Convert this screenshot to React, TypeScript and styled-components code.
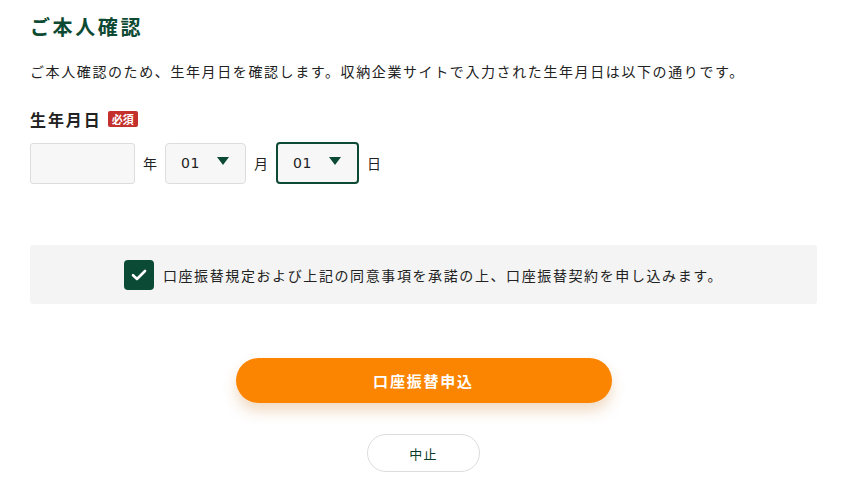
import React from "react";
import styled, { createGlobalStyle } from "styled-components";

const Global = createGlobalStyle`
  html, body { margin: 0; padding: 0; background: #fff; }
  body {
    font-family: "Noto Sans CJK JP", "Noto Sans", sans-serif;
    color: #222;
    letter-spacing: 0.1em;
  }
`;

const Page = styled.div`
  padding: 12px 25px 0 30px;
  display: flex;
  flex-direction: column;
`;

const Title = styled.h1`
  margin: 0;
  font-size: 20px;
  line-height: 30px;
  font-weight: 700;
  letter-spacing: 0.13em;
  color: #0d4a33;
`;

const Lead = styled.p`
  margin: 19px 0 0;
  font-size: 14px;
  line-height: 20px;
  color: #222;
`;

const FieldLabel = styled.div`
  margin-top: 26px;
  display: flex;
  align-items: center;
  gap: 6px;
  font-size: 16px;
  font-weight: 700;
  line-height: 24px;
  letter-spacing: 0.12em;
  color: #222;
`;

const Badge = styled.span`
  background: #c4302b;
  color: #fff;
  font-size: 11px;
  font-weight: 700;
  line-height: 14px;
  letter-spacing: 0;
  padding: 1px 4px;
  border-radius: 2px;
`;

const DateRow = styled.div`
  margin-top: 11px;
  display: flex;
  align-items: center;
`;

const YearInput = styled.input`
  box-sizing: border-box;
  width: 105px;
  height: 41px;
  border: 1px solid #ddd;
  border-radius: 3px;
  background: #f7f7f7;
  outline: none;
  font-size: 14px;
  font-family: inherit;
`;

const Unit = styled.span`
  font-size: 14px;
  letter-spacing: 0;
  color: #222;
  margin: 0 8px;
`;

const SelectBox = styled.div<{ $focused?: boolean }>`
  box-sizing: border-box;
  width: ${(p) => (p.$focused ? 83 : 81)}px;
  height: ${(p) => (p.$focused ? 42 : 41)}px;
  border: ${(p) => (p.$focused ? "2px solid #0d4a33" : "1px solid #ddd")};
  border-radius: 4px;
  background: #f7f7f7;
  display: flex;
  align-items: center;
  justify-content: space-between;
  padding: 0 ${(p) => (p.$focused ? 16 : 16)}px 0 15px;
  font-family: "DejaVu Sans", sans-serif;
  font-size: 14px;
  letter-spacing: 0.05em;
  color: #222;
`;

const Caret = styled.span`
  width: 0;
  height: 0;
  border-left: 6px solid transparent;
  border-right: 6px solid transparent;
  border-top: 8px solid #0d4a33;
  margin-top: -4px;
`;

const AgreePanel = styled.div`
  margin-top: 61px;
  height: 59px;
  background: #f4f4f4;
  border-radius: 3px;
  display: flex;
  align-items: center;
  justify-content: center;
  gap: 9px;
`;

const CheckBox = styled.span`
  width: 30px;
  height: 30px;
  border-radius: 4px;
  background: #0b4a35;
  display: flex;
  align-items: center;
  justify-content: center;
`;

const AgreeText = styled.span`
  font-size: 14px;
  color: #222;
`;

const Actions = styled.div`
  margin-top: 54px;
  display: flex;
  flex-direction: column;
  align-items: center;
  gap: 31px;
`;

const PrimaryButton = styled.button`
  width: 376px;
  height: 45px;
  border: none;
  border-radius: 23px;
  background: #fb8500;
  color: #fff;
  font-family: inherit;
  font-size: 15px;
  font-weight: 700;
  letter-spacing: 0.12em;
  box-shadow: 0 8px 14px rgba(200, 110, 20, 0.25);
  cursor: pointer;
`;

const CancelButton = styled.button`
  width: 113px;
  height: 38px;
  border: 1px solid #ddd;
  border-radius: 19px;
  background: #fff;
  color: #0d3a2a;
  font-family: inherit;
  font-size: 13px;
  letter-spacing: 0.1em;
  cursor: pointer;
`;

export default function App() {
  return (
    <>
      <Global />
      <Page>
        <Title>ご本人確認</Title>
        <Lead>ご本人確認のため、生年月日を確認します。収納企業サイトで入力された生年月日は以下の通りです。</Lead>
        <FieldLabel>
          生年月日<Badge>必須</Badge>
        </FieldLabel>
        <DateRow>
          <YearInput />
          <Unit>年</Unit>
          <SelectBox>
            01<Caret />
          </SelectBox>
          <Unit>月</Unit>
          <SelectBox $focused>
            01<Caret />
          </SelectBox>
          <Unit>日</Unit>
        </DateRow>
        <AgreePanel>
          <CheckBox>
            <svg width="16" height="12" viewBox="0 0 16 12">
              <path d="M2 6.2 L6 10 L14 2" fill="none" stroke="#fff" strokeWidth="2.6" strokeLinecap="round" strokeLinejoin="round" />
            </svg>
          </CheckBox>
          <AgreeText>口座振替規定および上記の同意事項を承諾の上、口座振替契約を申し込みます。</AgreeText>
        </AgreePanel>
        <Actions>
          <PrimaryButton>口座振替申込</PrimaryButton>
          <CancelButton>中止</CancelButton>
        </Actions>
      </Page>
    </>
  );
}
